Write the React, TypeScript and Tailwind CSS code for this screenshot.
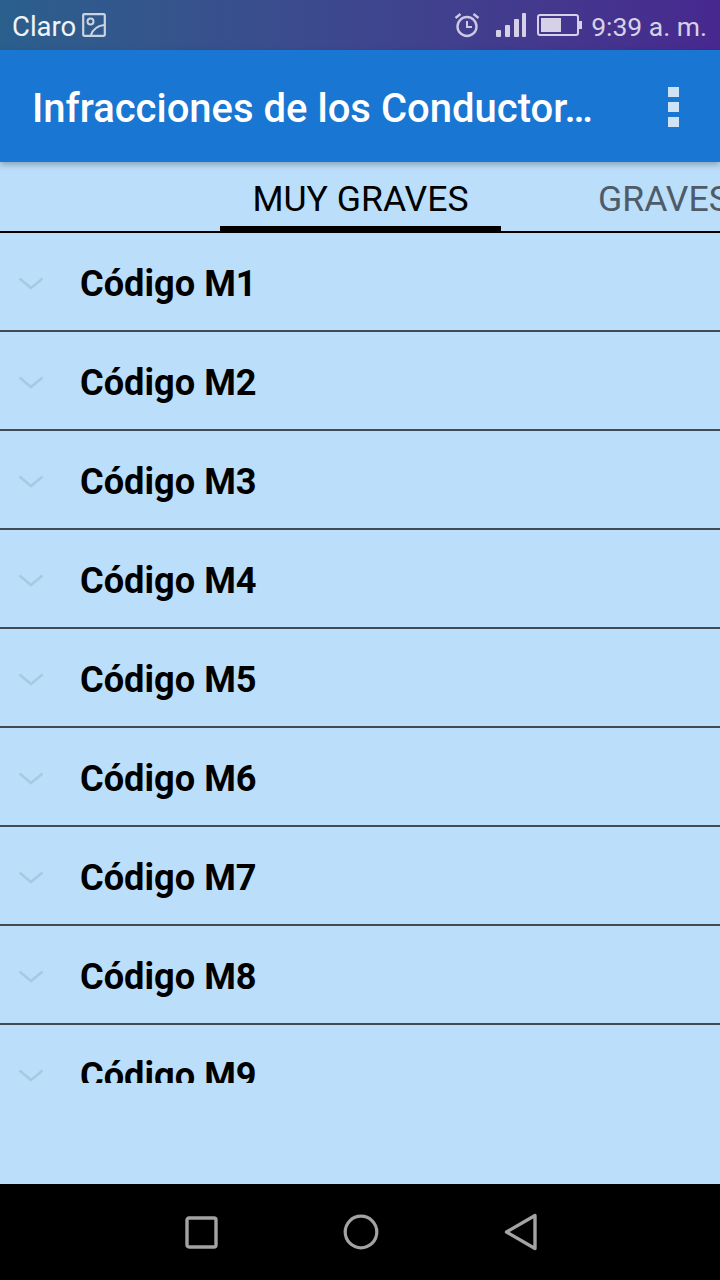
const codes = ["M1", "M2", "M3", "M4", "M5", "M6", "M7", "M8"];

function Chevron() {
  return (
    <svg width="26" height="16" viewBox="0 0 26 16" className="shrink-0">
      <path d="M1.5 2.5 L13 12 L24.5 2.5" fill="none" stroke="#a9c9e0" strokeWidth="2.6" />
    </svg>
  );
}

function Row({ code, last }: { code: string; last?: boolean }) {
  return (
    <div className={last ? "flex h-[58px] items-start overflow-hidden pl-[18px]" : "flex h-[99px] items-center border-b-2 border-[#444b50] pl-[18px]"}>
      <div className={last ? "mt-[43px]" : "mt-[5px]"}>
        <Chevron />
      </div>
      <span className={last ? "ml-[36px] mt-[27px] text-[36.2px] leading-[48px] font-bold text-black" : "ml-[36px] mt-[5px] text-[36.2px] leading-[48px] font-bold text-black"}>
        Código {code}
      </span>
    </div>
  );
}

export default function App() {
  return (
    <div className="flex h-[1280px] w-[720px] flex-col overflow-hidden bg-[#bbdefb] font-['Roboto',sans-serif]">
      <div className="flex h-[50px] shrink-0 items-center justify-between bg-gradient-to-r from-[#2a5f8c] to-[#47288e] pl-[12px] pr-[13px]">
        <div className="flex items-center gap-[6px]">
          <span className="mt-[4px] text-[27.5px] leading-[46px] text-[#f1f4f8]">Claro</span>
          <svg width="24" height="24" viewBox="0 0 24 24">
            <rect x="1.2" y="1.2" width="21.6" height="21.6" rx="1" fill="none" stroke="#c9d3e2" strokeWidth="2.2" />
            <circle cx="8.5" cy="8.5" r="3" fill="none" stroke="#c9d3e2" strokeWidth="2" />
            <path d="M9 22 C11 16 15 13 22 12" fill="none" stroke="#c9d3e2" strokeWidth="2.2" />
          </svg>
        </div>
        <div className="flex items-center">
          <svg width="26" height="26" viewBox="0 0 26 26" className="mr-[16px]">
            <circle cx="13" cy="14.5" r="9.5" fill="none" stroke="#cfc8e4" strokeWidth="2.4" />
            <path d="M13 9 V15 H18" fill="none" stroke="#cfc8e4" strokeWidth="2" />
            <path d="M1.5 6 L6.5 2 M24.5 6 L19.5 2" fill="none" stroke="#cfc8e4" strokeWidth="2.4" />
          </svg>
          <svg width="30" height="24" viewBox="0 0 30 24" className="mr-[11px]">
            <rect x="0" y="17" width="5" height="7" rx="1" fill="#d7d1e8" />
            <rect x="9" y="12" width="5" height="12" rx="1" fill="#d7d1e8" />
            <rect x="18" y="6" width="5" height="18" rx="1" fill="#d7d1e8" />
            <rect x="26" y="0" width="4" height="24" rx="1" fill="#d7d1e8" />
          </svg>
          <svg width="46" height="22" viewBox="0 0 46 22" className="mr-[8px]">
            <rect x="1" y="1" width="40" height="20" rx="2" fill="none" stroke="#d7d1e8" strokeWidth="2" />
            <rect x="4" y="4" width="20" height="14" fill="#d7d1e8" />
            <rect x="42" y="7" width="3" height="8" fill="#d7d1e8" />
          </svg>
          <span className="mt-[4px] text-[26.5px] leading-[46px] text-[#d7d1e8]">9:39 a. m.</span>
        </div>
      </div>

      <div className="relative z-10 flex h-[112px] shrink-0 items-center justify-between bg-[#1976d2] pl-[32px] pr-[41px] shadow-[0_3px_6px_rgba(0,0,0,0.25)]">
        <h1 className="mt-[6px] text-[40px] leading-[50px] font-medium whitespace-nowrap text-white">Infracciones de los Conductor…</h1>
        <div className="mt-[2px] flex flex-col gap-[5px]">
          <div className="h-[10px] w-[11px] bg-[#cfe3f6]" />
          <div className="h-[10px] w-[11px] bg-[#cfe3f6]" />
          <div className="h-[10px] w-[11px] bg-[#cfe3f6]" />
        </div>
      </div>

      <div className="flex h-[71px] shrink-0 overflow-hidden border-b-2 border-black pl-[220px]">
        <div className="flex h-[69px] w-[281px] shrink-0 items-center justify-center border-b-[5px] border-black">
          <span className="mt-[10px] text-[35.6px] leading-[48px] whitespace-nowrap text-black">MUY GRAVES</span>
        </div>
        <div className="ml-[97px] flex h-[69px] items-center">
          <span className="mt-[5px] text-[35.6px] leading-[48px] whitespace-nowrap text-[#4f5b66]">GRAVES</span>
        </div>
      </div>

      <div className="flex-1 overflow-hidden">
        {codes.map((code) => (
          <Row key={code} code={code} />
        ))}
        <Row code="M9" last />
      </div>

      <div className="flex h-[96px] shrink-0 items-center bg-black pl-[185px]">
        <svg width="33" height="33" viewBox="0 0 33 33">
          <rect x="2" y="2" width="29" height="29" rx="2" fill="none" stroke="#a3a3a3" strokeWidth="3.4" />
        </svg>
        <svg width="36" height="36" viewBox="0 0 36 36" className="ml-[125px]">
          <circle cx="18" cy="18" r="15.8" fill="none" stroke="#a3a3a3" strokeWidth="3.2" />
        </svg>
        <svg width="34" height="38" viewBox="0 0 34 38" className="ml-[125px]">
          <path d="M31 2.5 V35.5 L2.5 19 Z" fill="none" stroke="#a3a3a3" strokeWidth="3.4" strokeLinejoin="round" />
        </svg>
      </div>
    </div>
  );
}
